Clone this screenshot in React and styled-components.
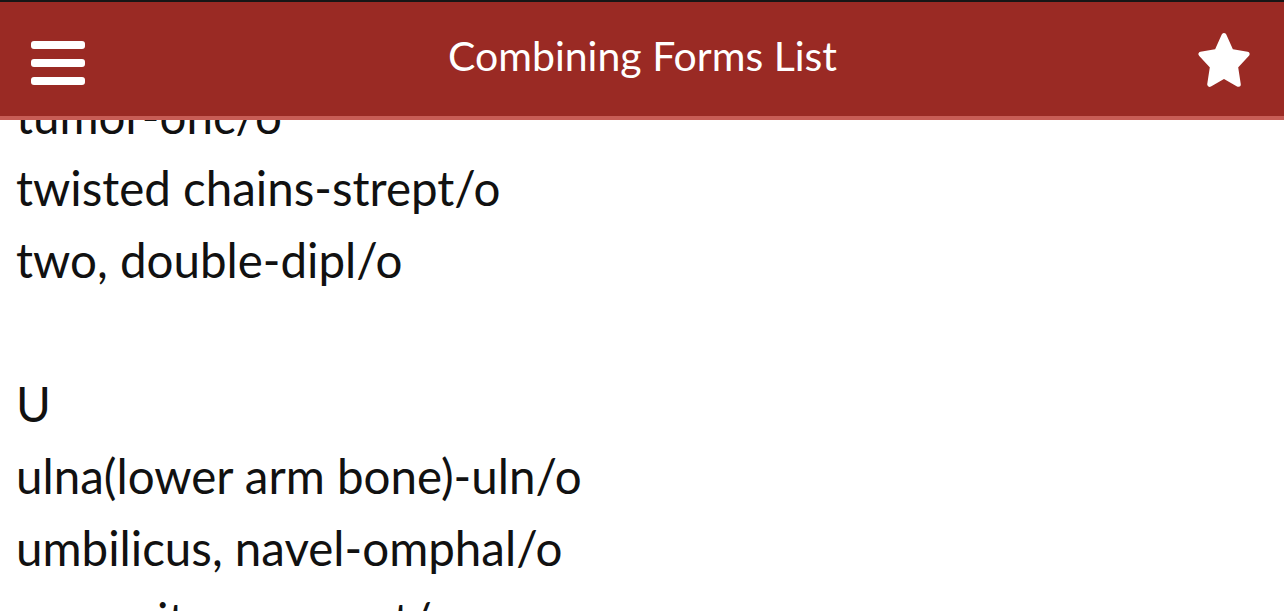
import React from "react";
import styled, { createGlobalStyle } from "styled-components";

const GlobalStyle = createGlobalStyle`
  html, body {
    margin: 0;
    padding: 0;
    background: #ffffff;
    overflow: hidden;
  }
  body {
    font-family: Lato, "Liberation Sans", Arial, sans-serif;
  }
`;

const Page = styled.div`
  width: 1284px;
  height: 611px;
  position: relative;
  overflow: hidden;
  background: #ffffff;
`;

const Header = styled.header`
  position: absolute;
  top: 0;
  left: 0;
  right: 0;
  z-index: 2;
  height: 114px;
  border-top: 2px solid #161616;
  border-bottom: 4px solid #c85d56;
  background: #9a2a24;
  display: grid;
  grid-template-columns: 1fr auto 1fr;
  align-items: center;
  padding: 0 30px 0 31px;
`;

const MenuButton = styled.button`
  justify-self: start;
  width: 54px;
  padding: 0;
  margin-top: 8px;
  border: none;
  background: transparent;
  display: flex;
  flex-direction: column;
  gap: 10px;
  cursor: pointer;
`;

const Bar = styled.span`
  display: block;
  height: 8px;
  border-radius: 3px;
  background: #ffffff;
`;

const Title = styled.h1`
  margin: -7px 0 0 0;
  color: #ffffff;
  font-family: Lato, "Liberation Sans", Arial, sans-serif;
  font-weight: 400;
  font-size: 41px;
  line-height: 1;
  white-space: nowrap;
`;

const StarButton = styled.button`
  justify-self: end;
  width: 60px;
  height: 60px;
  padding: 0;
  border: none;
  background: transparent;
  display: block;
  cursor: pointer;
`;

const List = styled.ul`
  list-style: none;
  margin: 0;
  padding: 80px 0 0 16px;
`;

const Item = styled.li`
  height: 72px;
  line-height: 72px;
  font-size: 47.5px;
  color: #111111;
  white-space: nowrap;
`;

function starPath(cx, cy, R, r, sx) {
  const pts = [];
  for (let k = 0; k < 10; k++) {
    const a = ((-90 + 36 * k) * Math.PI) / 180;
    const rad = k % 2 === 0 ? R : r;
    pts.push(
      `${(cx + rad * Math.cos(a) * sx).toFixed(2)} ${(cy + rad * Math.sin(a)).toFixed(2)}`
    );
  }
  return "M" + pts.join(" L") + " Z";
}

function StarIcon() {
  return (
    <svg width="60" height="60" viewBox="0 0 60 60" aria-hidden="true">
      <path
        d={starPath(30, 33.5, 27, 13.5, 0.9)}
        fill="#ffffff"
        stroke="#ffffff"
        strokeWidth="5"
        strokeLinejoin="round"
      />
    </svg>
  );
}

const items = [
  "tumor-onc/o",
  "twisted chains-strept/o",
  "two, double-dipl/o",
  "",
  "U",
  "ulna(lower arm bone)-uln/o",
  "umbilicus, navel-omphal/o",
  "urea, nitrogen-azot/o",
];

export default function App() {
  return (
    <>
      <GlobalStyle />
      <Page>
        <Header>
          <MenuButton aria-label="Menu">
            <Bar />
            <Bar />
            <Bar />
          </MenuButton>
          <Title>Combining Forms List</Title>
          <StarButton aria-label="Favorite">
            <StarIcon />
          </StarButton>
        </Header>
        <List>
          {items.map((t, i) => (
            <Item key={i}>{t}</Item>
          ))}
        </List>
      </Page>
    </>
  );
}
